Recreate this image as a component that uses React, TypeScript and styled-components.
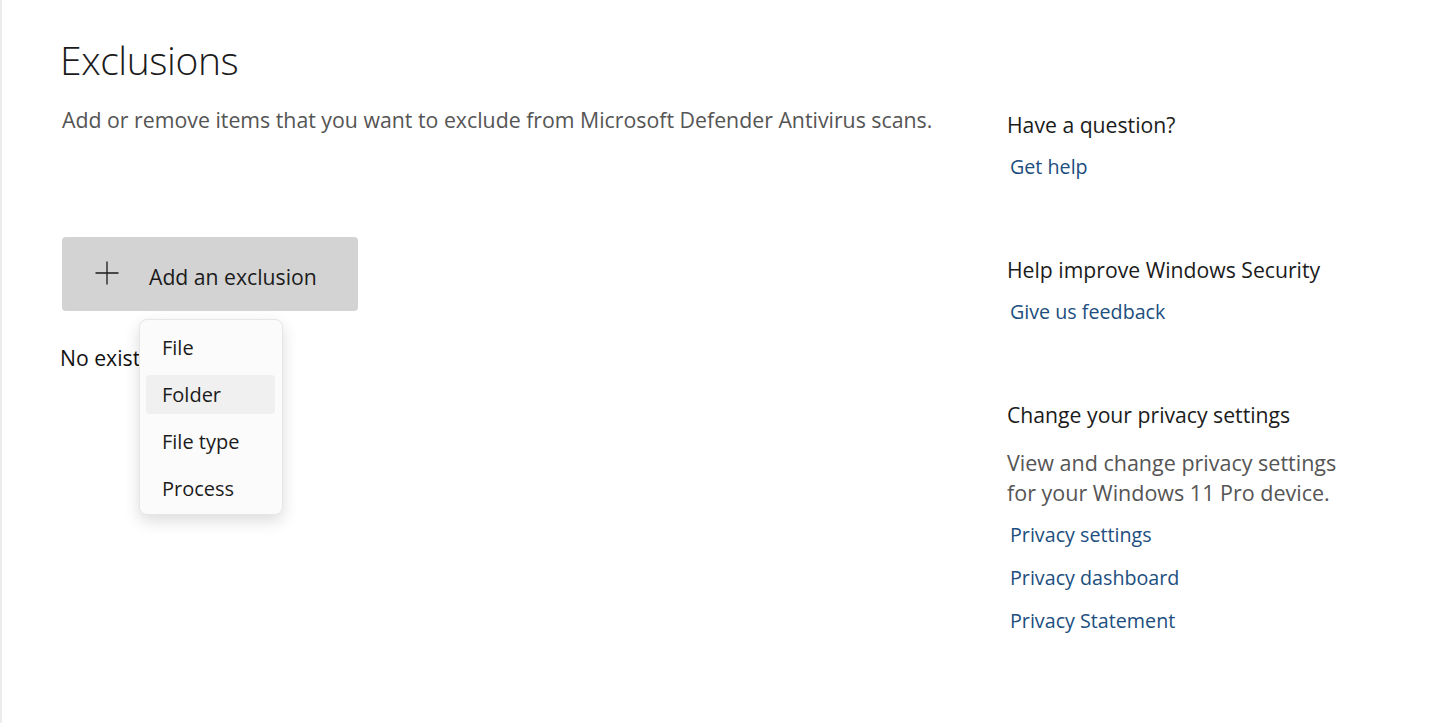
import React from "react";
import styled, { createGlobalStyle } from "styled-components";

const GlobalStyle = createGlobalStyle`
  html, body {
    margin: 0;
    padding: 0;
    background: #ffffff;
  }
  body {
    font-family: "Open Sans", "Noto Sans", "Liberation Sans", sans-serif;
    color: #1b1b1b;
  }
`;

const Page = styled.div`
  display: grid;
  grid-template-columns: 1fr 425px;
  min-height: 723px;
  box-sizing: border-box;
  border-left: 2px solid #ececec;
`;

const Main = styled.main`
  padding: 38px 0 0 58px;
`;

const Title = styled.h1`
  margin: 0;
  font-size: 39px;
  font-weight: 300;
  line-height: 44px;
  color: #1b1b1b;
  letter-spacing: -0.4px;
`;

const Subtitle = styled.p`
  margin: 23px 0 0 2px;
  font-size: 21.3px;
  line-height: 30px;
  color: #555555;
`;

const ActionArea = styled.div`
  position: relative;
  margin: 102px 0 0 2px;
  width: 296px;
`;

const AddButton = styled.button`
  display: flex;
  align-items: center;
  gap: 30px;
  width: 296px;
  height: 74px;
  padding: 5px 0 0 33px;
  box-sizing: border-box;
  border: none;
  border-radius: 4px;
  background: #d3d3d3;
  font-family: inherit;
  font-size: 21.2px;
  color: #1b1b1b;
  cursor: pointer;
`;

const PlusIcon = styled.svg`
  flex: none;
  margin-top: -8px;
`;

const ButtonLabel = styled.span`
  line-height: 30px;
`;

const Menu = styled.ul`
  position: absolute;
  top: 82px;
  left: 77px;
  width: 144px;
  margin: 0;
  padding: 8px 7px 6px 6px;
  box-sizing: border-box;
  list-style: none;
  display: flex;
  flex-direction: column;
  gap: 8px;
  background: #fbfbfb;
  border: 1px solid #e6e6e6;
  border-radius: 8px;
  box-shadow: 0 6px 16px rgba(0, 0, 0, 0.14);
`;

const MenuItem = styled.li<{ active?: boolean }>`
  height: 39px;
  padding-left: 16px;
  display: flex;
  align-items: center;
  border-radius: 4px;
  font-size: 20px;
  color: #1b1b1b;
  background: ${({ active }) => (active ? "#f0f0f0" : "transparent")};
`;

const EmptyText = styled.p`
  margin: 32px 0 0 -2px;
  font-size: 21.2px;
  line-height: 30px;
  color: #111111;
`;

const Aside = styled.aside`
  padding-top: 110px;
  display: flex;
  flex-direction: column;
  gap: 73px;
`;

const Section = styled.section`
  display: flex;
  flex-direction: column;
`;

const SectionTitle = styled.h2`
  margin: 0;
  font-size: 21.2px;
  font-weight: 400;
  line-height: 30px;
  color: #1b1b1b;
`;

const Description = styled.p`
  margin: 18px 0 0 0;
  font-size: 21.5px;
  line-height: 30px;
  color: #555555;
`;

const LinkList = styled.div`
  margin-top: 12px;
  display: flex;
  flex-direction: column;
  gap: 13px;
`;

const HelpLink = styled.a`
  padding-left: 3px;
  font-size: 19.7px;
  line-height: 30px;
  color: #204e7e;
  text-decoration: none;
  cursor: pointer;
`;

const sections = [
  { title: "Have a question?", links: ["Get help"] },
  { title: "Help improve Windows Security", links: ["Give us feedback"] },
  {
    title: "Change your privacy settings",
    description: ["View and change privacy settings", "for your Windows 11 Pro device."],
    links: ["Privacy settings", "Privacy dashboard", "Privacy Statement"],
  },
];

const menuItems = ["File", "Folder", "File type", "Process"];

export default function App() {
  return (
    <>
      <GlobalStyle />
      <Page>
        <Main>
          <Title>Exclusions</Title>
          <Subtitle>
            Add or remove items that you want to exclude from Microsoft Defender Antivirus scans.
          </Subtitle>
          <ActionArea>
            <AddButton>
              <PlusIcon width="24" height="24" viewBox="0 0 24 24">
                <path d="M12 0.5V23.5M0.5 12H23.5" stroke="#1b1b1b" strokeWidth="1.3" fill="none" />
              </PlusIcon>
              <ButtonLabel>Add an exclusion</ButtonLabel>
            </AddButton>
            <EmptyText>No existing exclusions.</EmptyText>
            <Menu>
              {menuItems.map((item) => (
                <MenuItem key={item} active={item === "Folder"}>
                  {item}
                </MenuItem>
              ))}
            </Menu>
          </ActionArea>
        </Main>
        <Aside>
          {sections.map((s) => (
            <Section key={s.title}>
              <SectionTitle>{s.title}</SectionTitle>
              {s.description && (
                <Description>
                  {s.description.map((line) => (
                    <React.Fragment key={line}>
                      {line}
                      <br />
                    </React.Fragment>
                  ))}
                </Description>
              )}
              <LinkList>
                {s.links.map((l) => (
                  <HelpLink key={l}>{l}</HelpLink>
                ))}
              </LinkList>
            </Section>
          ))}
        </Aside>
      </Page>
    </>
  );
}
